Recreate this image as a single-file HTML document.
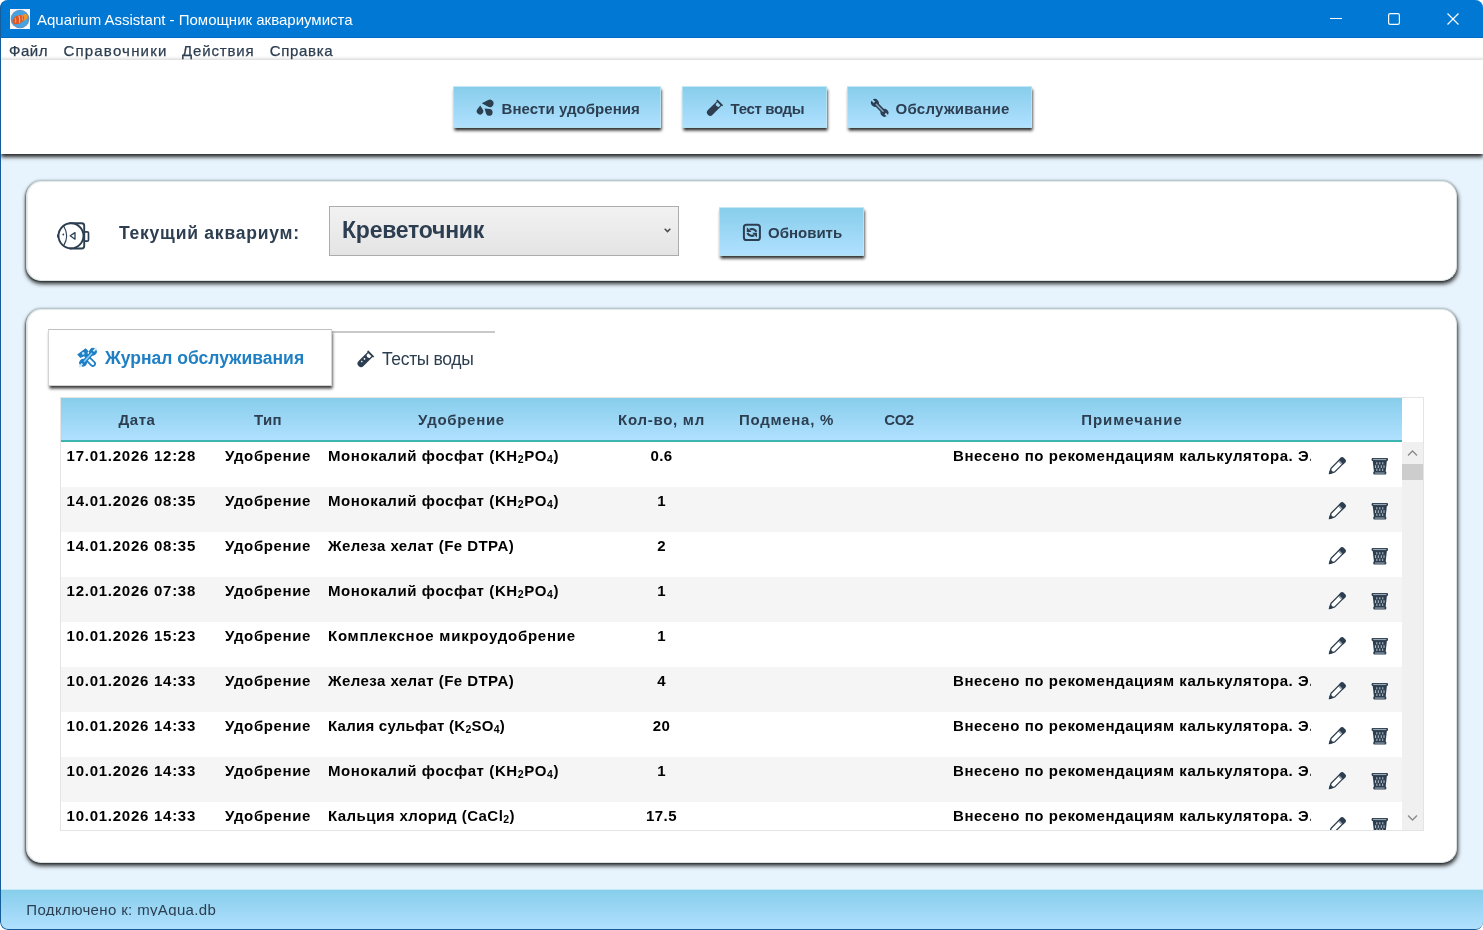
<!DOCTYPE html>
<html lang="ru">
<head>
<meta charset="utf-8">
<title>Aquarium Assistant</title>
<style>
*{box-sizing:border-box;margin:0;padding:0}
html,body{width:1483px;height:930px;overflow:hidden;background:#fff}
body{font-family:"Liberation Sans",sans-serif;color:#2c3e50;position:relative}
.abs{position:absolute}
#win{will-change:transform;position:absolute;left:0;top:0;width:1483px;height:930px;background:#e8f4fd;border-radius:8px 8px 8px 8px;overflow:hidden}
#win::after{content:"";position:absolute;left:0;top:0;right:-1px;bottom:0;border:1px solid #155d9a;border-top:none;border-radius:8px;pointer-events:none}
#title{position:absolute;left:0;top:0;width:1483px;height:38px;background:#0078d4;border-bottom:1px solid #006ac4}
#title .txt{position:absolute;left:37px;top:10.500px;font-size:15px;line-height:18px;color:#fff;white-space:nowrap}
#menu{position:absolute;left:1px;top:38px;width:1482px;height:22px;background:linear-gradient(#fff 0,#fff 18px,#f3f3f3 20px,#e9e9e9 21.300px,#f4f4f4 22px)}
#menu span{position:absolute;top:4px;font-size:15px;line-height:18px;white-space:nowrap;color:#2c3e50;-webkit-text-stroke:0.25px #2c3e50}
#tool{position:absolute;left:1px;top:60px;width:1482px;height:94px;background:#fff;box-shadow:0 3px 4px rgba(0,0,0,.85)}
.btn{position:absolute;background:linear-gradient(#87ceeb,#b0e0ff);box-shadow:.5px 2.5px 3px rgba(0,0,0,.85);border:1px solid rgba(215,235,235,.55)}
.btn .t{position:absolute;font-weight:bold;font-size:15px;line-height:20px;white-space:nowrap;color:#2c3e50}
.panel{position:absolute;background:#fff;border-radius:15px;box-shadow:.5px 3px 4px rgba(0,0,0,.78),0 0 2px rgba(0,0,0,.25),0 -1.500px 1.500px rgba(110,130,135,.17),-1px 1px 1.500px rgba(60,75,80,.38),inset 1px 0 0 #e6ebec;border:1px solid #d9e1e3;border-top-color:#e3e9e9}
#status{position:absolute;left:1px;top:889px;width:1482px;height:40px;background:linear-gradient(#87ceeb,#b0e0ff);border-top:1px solid #c4e8f6}

.lbl{font-weight:bold;font-size:17.5px;line-height:22px;white-space:nowrap;color:#2c3e50}
.combo{background:linear-gradient(#f2f2f2,#e4e4e4);border:1px solid #acacac}
.cval{font-weight:bold;font-size:23px;line-height:28px;white-space:nowrap;color:#2c3e50}

.tabA{background:#fff;border:1px solid #d4d4d4;border-top-color:#c0c0c0;box-shadow:.5px 2.5px 3px rgba(0,0,0,.8)}
.ta{font-weight:bold;font-size:17.5px;line-height:22px;white-space:nowrap;color:#1e7fc4}
.tb{font-size:17.5px;line-height:22px;white-space:nowrap;color:#2c3e50;letter-spacing:-.34px}
#grid{border:1px solid #e4e4e4;background:#fff}
#hdr{background:linear-gradient(#87ceeb,#b0e0ff);border-bottom:2px solid #3db6b2}
.h{margin-left:1px;position:absolute;top:13px;text-align:center;font-weight:bold;font-size:15px;line-height:18px;color:#2c3e50;white-space:nowrap}
.row{position:absolute;left:0;width:1341px;height:45px}
.c{margin-left:1px;position:absolute;top:5px;font-weight:bold;font-size:15px;line-height:18px;color:#000;white-space:nowrap}
.c sub{font-size:10.500px;vertical-align:baseline;position:relative;top:2px;line-height:0}
.c1{left:4.600px;letter-spacing:.74px}
.c2{left:150px;width:112px;text-align:center;letter-spacing:.62px}
.c3{left:266px}
.c4{left:537px;width:125px;text-align:center;letter-spacing:.4px}
.c7{left:891px;width:358.400px;overflow:hidden;letter-spacing:.57px}
.st{font-size:15px;line-height:18px;white-space:nowrap;color:#2c3e50;letter-spacing:.36px}
</style>
</head>
<body>
<div id="win">
  <div id="title">
    <svg class="abs" style="left:10px;top:9px" width="20" height="20" viewBox="0 0 20 20">
      <rect width="20" height="20" fill="#f6f7fb"/>
      <circle cx="10" cy="10" r="9.300" fill="#6f8fb4"/>
      <circle cx="10" cy="10" r="8.500" fill="#46a3e2"/>
      <ellipse cx="14.800" cy="8.200" rx="2.500" ry="3.300" fill="#f39521" transform="rotate(25 14.800 8.200)"/>
      <ellipse cx="8.300" cy="10.600" rx="6.300" ry="4.100" fill="#e2561f" transform="rotate(-27 8.300 10.600)"/>
      <path d="M8.800 6.600Q10.200 9.800 9.600 13.600" stroke="#f3c7b2" stroke-width="1" fill="none"/>
      <path d="M5.300 9Q6 11.400 5.600 13.600" stroke="#f0b9a0" stroke-width=".8" fill="none"/>
      <path d="M11.800 5.800Q12.900 8.600 12.400 11.400" stroke="#ef9a78" stroke-width=".9" fill="none"/>
    </svg>
    <div class="txt">Aquarium Assistant - Помощник аквариумиста</div>
    <svg class="abs" style="left:1320px;top:8px" width="150" height="22" viewBox="0 0 150 22" fill="none" stroke="#fff" stroke-width="1.200">
      <path d="M10 10.500H22"/>
      <rect x="68.600" y="5.600" width="10.800" height="10.800" rx="1.600"/>
      <path d="M127.500 5.500L138.500 16.500M138.500 5.500L127.500 16.500"/>
    </svg>
  </div>
  <div id="menu">
    <span style="left:8px;letter-spacing:.5px">Файл</span>
    <span style="left:62.400px;letter-spacing:1.210px">Справочники</span>
    <span style="left:181px;letter-spacing:.85px">Действия</span>
    <span style="left:268.700px;letter-spacing:.68px">Справка</span>
  </div>
  <div id="tool">
    <div class="btn" style="left:452px;top:26px;width:208px;height:42px">
      <div class="t" style="left:47.500px;top:12px;letter-spacing:.05px">Внести удобрения</div>
    </div>
    <div class="btn" style="left:681px;top:26px;width:145px;height:42px">
      <div class="t" style="left:47.600px;top:12px;letter-spacing:-.35px">Тест воды</div>
    </div>
    <div class="btn" style="left:846px;top:26px;width:185px;height:42px">
      <div class="t" style="left:47.600px;top:12px;letter-spacing:.27px">Обслуживание</div>
    </div>
  </div>
  <div class="panel" id="p1" style="left:26px;top:181px;width:1431px;height:100px">
    <div class="abs lbl" style="left:92px;top:40px;letter-spacing:.77px">Текущий аквариум:</div>
    <div class="abs combo" style="left:302px;top:24px;width:350px;height:50px">
      <div class="abs cval" style="left:12px;top:9px;letter-spacing:-.23px">Креветочник</div>
      <svg class="abs" style="left:332.600px;top:20px" width="9" height="7" viewBox="0 0 9 7" fill="none" stroke="#4a4a4a" stroke-width="1.500"><path d="M1.700 1.800L4.500 4.600L7.300 1.800"/></svg>
    </div>
    <div class="btn" style="left:692px;top:25px;width:145px;height:49px">
      <div class="t" style="left:48px;top:15px">Обновить</div>
    </div>
  </div>
  <div class="panel" id="p2" style="left:26px;top:309px;width:1431px;height:554px">
    <div class="abs" style="left:304px;top:21px;width:164px;height:2px;background:#c9c9c9"></div>
    <div class="abs tabA" style="left:21px;top:19px;width:284px;height:57px">
      <div class="abs ta" style="left:56px;top:17px">Журнал обслуживания</div>
    </div>
    <div class="abs tb" style="left:355px;top:38px">Тесты воды</div>

    <div class="abs" id="grid" style="left:33px;top:87px;width:1364px;height:434px">
      <div class="abs" id="hdr" style="left:0;top:0;width:1341px;height:44px">
        <div class="h" style="left:0;width:150px;letter-spacing:.57px">Дата</div>
        <div class="h" style="left:150px;width:112px;letter-spacing:.4px">Тип</div>
        <div class="h" style="left:262px;width:275px;letter-spacing:.7px">Удобрение</div>
        <div class="h" style="left:537px;width:125px;letter-spacing:.72px">Кол-во, мл</div>
        <div class="h" style="left:662px;width:125px;letter-spacing:.73px">Подмена, %</div>
        <div class="h" style="left:787px;width:100px;letter-spacing:-.5px">CO2</div>
        <div class="h" style="left:887px;width:366px;letter-spacing:.97px">Примечание</div>
      </div>
      <div class="abs" id="rows" style="left:0;top:44px;width:1341px;height:388px;overflow:hidden">
      <div class="row" style="top:0px;background:#fff">
        <div class="c c1">17.01.2026 12:28</div><div class="c c2">Удобрение</div><div class="c c3" style="letter-spacing:.6px">Монокалий фосфат (KH<sub>2</sub>PO<sub>4</sub>)</div><div class="c c4">0.6</div><div class="c c7">Внесено по рекомендациям калькулятора. Э.</div>
        </div>
      <div class="row" style="top:45px;background:#f5f5f5">
        <div class="c c1">14.01.2026 08:35</div><div class="c c2">Удобрение</div><div class="c c3" style="letter-spacing:.6px">Монокалий фосфат (KH<sub>2</sub>PO<sub>4</sub>)</div><div class="c c4">1</div>
        </div>
      <div class="row" style="top:90px;background:#fff">
        <div class="c c1">14.01.2026 08:35</div><div class="c c2">Удобрение</div><div class="c c3" style="letter-spacing:.44px">Железа хелат (Fe DTPA)</div><div class="c c4">2</div>
        </div>
      <div class="row" style="top:135px;background:#f5f5f5">
        <div class="c c1">12.01.2026 07:38</div><div class="c c2">Удобрение</div><div class="c c3" style="letter-spacing:.6px">Монокалий фосфат (KH<sub>2</sub>PO<sub>4</sub>)</div><div class="c c4">1</div>
        </div>
      <div class="row" style="top:180px;background:#fff">
        <div class="c c1">10.01.2026 15:23</div><div class="c c2">Удобрение</div><div class="c c3" style="letter-spacing:.75px">Комплексное микроудобрение</div><div class="c c4">1</div>
        </div>
      <div class="row" style="top:225px;background:#f5f5f5">
        <div class="c c1">10.01.2026 14:33</div><div class="c c2">Удобрение</div><div class="c c3" style="letter-spacing:.44px">Железа хелат (Fe DTPA)</div><div class="c c4">4</div><div class="c c7">Внесено по рекомендациям калькулятора. Э.</div>
        </div>
      <div class="row" style="top:270px;background:#fff">
        <div class="c c1">10.01.2026 14:33</div><div class="c c2">Удобрение</div><div class="c c3" style="letter-spacing:.25px">Калия сульфат (K<sub>2</sub>SO<sub>4</sub>)</div><div class="c c4">20</div><div class="c c7">Внесено по рекомендациям калькулятора. Э.</div>
        </div>
      <div class="row" style="top:315px;background:#f5f5f5">
        <div class="c c1">10.01.2026 14:33</div><div class="c c2">Удобрение</div><div class="c c3" style="letter-spacing:.6px">Монокалий фосфат (KH<sub>2</sub>PO<sub>4</sub>)</div><div class="c c4">1</div><div class="c c7">Внесено по рекомендациям калькулятора. Э.</div>
        </div>
      <div class="row" style="top:360px;background:#fff">
        <div class="c c1">10.01.2026 14:33</div><div class="c c2">Удобрение</div><div class="c c3" style="letter-spacing:.47px">Кальция хлорид (CaCl<sub>2</sub>)</div><div class="c c4">17.5</div><div class="c c7">Внесено по рекомендациям калькулятора. Э.</div>
        </div>
      </div>
      <div class="abs" id="sb" style="left:1341px;top:44px;width:21px;height:388px;background:#f0f0f0">
        <svg class="abs" style="left:5px;top:7px" width="11" height="8" viewBox="0 0 11 8" fill="none" stroke="#8a8a8a" stroke-width="1.300"><path d="M1 6.500L5.500 2L10 6.500"/></svg>
        <div class="abs" style="left:0;top:22px;width:21px;height:16px;background:#cdcdcd"></div>
        <svg class="abs" style="left:5px;top:372px" width="11" height="8" viewBox="0 0 11 8" fill="none" stroke="#8a8a8a" stroke-width="1.300"><path d="M1 1.500L5.500 6L10 1.500"/></svg>
      </div>
    </div>
  </div>
  <div id="status"><div class="abs" style="left:0;top:0;width:600px;height:25.600px;overflow:hidden"><div class="abs st" style="left:25.300px;top:10.500px">Подключено к: myAqua.db</div></div></div>
<!--OV-START--><svg id="ov" class="abs" style="left:0;top:0;pointer-events:none" width="1483" height="930" viewBox="0 0 1483 930">
<defs><clipPath id="cr"><rect x="61" y="442" width="1341" height="388"/></clipPath></defs>
<g fill="#2c3e50">
<path d="M481.8 103.3L488.21 100.05A3.75 3.75 0 1 1 488.12 106.7Z"/>
<path d="M480.2 105.4L482.78 109.42A3.3 3.3 0 1 1 477.35 109.23Z"/>
<path d="M484.6 108.4L489.62 109.03A3.4 3.4 0 1 1 485.92 113.29Z"/>
</g>
<g transform="rotate(45 714.1 108.6)"><path d="M710 99.85H718.2V101.35H717.4V114.05A3.3 3.3 0 0 1 710.8 114.05V101.35H710Z" fill="#2c3e50"/><path d="M712.1 101.75H716.1V104.25Q714.1 106.05 712.1 104.25Z" fill="#a0d8f3"/></g>
<g transform="rotate(-44 879.7 107.8)"><rect x="877.5" y="100.9" width="4.4" height="13.8" fill="#2c3e50"/><circle cx="879.7" cy="100.9" r="3.9" fill="#2c3e50"/><circle cx="879.7" cy="114.7" r="3.9" fill="#2c3e50"/><rect x="878.95" y="102.4" width="1.5" height="10.8" fill="#86a9c4"/><rect x="878.75" y="95.4" width="1.9" height="4.9" fill="#9dd6f4"/><rect x="878.75" y="115.7" width="1.9" height="4.9" fill="#9dd6f4"/></g>
<g fill="none" stroke="#2c3e50" stroke-linecap="round" stroke-linejoin="round">
<path d="M70 223.200H81.700Q84.200 223.200 84.200 225.700V246Q84.200 248.500 81.700 248.500H70" stroke-width="1.900"/>
<circle cx="71" cy="235.800" r="12.500" stroke-width="1.900" fill="#fff"/>
<rect x="84.200" y="231.800" width="4.300" height="9.400" rx="1.300" stroke-width="1.700"/>
<path d="M63.800 226.200Q69.500 235.800 63.800 245.400" stroke-width="1.100"/>
<path d="M70.200 235.800L75 232.600V239.200Z" stroke-width="1.300"/>
<circle cx="63.300" cy="234.500" r="0.900" fill="#2c3e50" stroke="none"/>
<path d="M57.600 234.800v2.200" stroke-width="1.100"/>
</g>
<g fill="none" stroke="#2c3e50">
<rect x="743.900" y="224.700" width="16" height="15.400" rx="2.600" stroke-width="2"/>
<path d="M749.600 229.600A5 5 0 0 1 756.400 231.700" stroke-width="2.200"/>
<path d="M754.200 235.200A5 5 0 0 1 747.400 233.100" stroke-width="2.200"/>
<path d="M746.800 227.300V232H751.500Z" fill="#2c3e50" stroke="none"/>
<path d="M757 237.500V232.800H752.300Z" fill="#2c3e50" stroke="none"/>
</g>
<g>
<g transform="rotate(-45 86.500 357.500)">
  <rect x="84.400" y="358" width="4.400" height="10.600" rx="2.200" fill="#fff" stroke="#1e7fc4" stroke-width="1.700"/>
</g>
<path d="M77.200 354.600L85.600 348.300L88.800 351.400L87.200 353.100L89.300 355.200L86.200 358.300L84.100 356.200L80.300 357.900Z" fill="#1e7fc4"/>
<circle cx="83.200" cy="353.400" r="1.300" fill="#bfe4ff"/>

<g transform="rotate(42 88 357.3)"><rect x="85.9" y="349.9" width="4.2" height="14.8" fill="#1e7fc4"/><circle cx="88" cy="349.9" r="3.8" fill="#1e7fc4"/><circle cx="88" cy="364.7" r="3.8" fill="#1e7fc4"/><rect x="87.25" y="351.4" width="1.5" height="11.8" fill="#8fd0ff"/><rect x="87.05" y="344.5" width="1.9" height="4.8" fill="#cfe8fb"/><rect x="87.05" y="365.7" width="1.9" height="4.8" fill="#cfe8fb"/></g>
</g>
<g transform="rotate(45 364.9 359.7)"><path d="M360.6 350.8H369.2V352.3H368.4V365.1A3.5 3.5 0 0 1 361.4 365.1V352.3H360.6Z" fill="#2c3e50"/><path d="M362.7 352.7H367.1V355.2Q364.9 357 362.7 355.2Z" fill="#fff"/><circle cx="364" cy="359.4" r="0.9" fill="#fff"/><circle cx="364" cy="363.2" r="0.8" fill="#fff"/></g>
<g clip-path="url(#cr)">
<g transform="translate(0 0)"><g transform="rotate(45 1337.200 465.800)">
<path d="M1334.600 457.600H1339.800V471.800L1337.200 476.700L1334.600 471.800Z" fill="#fff" stroke="#2c3e50" stroke-width="1.300" stroke-linejoin="round"/>
<path d="M1334.600 457.400Q1334.600 456.200 1335.800 456.200H1338.600Q1339.800 456.200 1339.800 457.400V460H1334.600Z" fill="#2c3e50" stroke="#2c3e50" stroke-width="1.300" stroke-linejoin="round"/>
<path d="M1334.600 461.500H1339.800" stroke="#2c3e50" stroke-width="0.800"/>
<path d="M1335.500 473.600H1338.900L1337.200 476.800Z" fill="#2c3e50" stroke="#2c3e50" stroke-width="1"/>
</g><rect x="1371.600" y="458" width="16.400" height="3" rx="1" fill="#2c3e50"/>
<rect x="1373.200" y="458.900" width="13.200" height="1.200" fill="#9aa7b3"/>
<path d="M1372.700 460.800H1386.900L1385.600 472.200H1374Z" fill="#2c3e50"/>
<rect x="1373.300" y="471.600" width="13" height="2.800" rx="1" fill="#2c3e50"/>
<rect x="1375" y="472.500" width="9.600" height="1.100" fill="#9aa7b3"/>
<path stroke="#cdd6de" stroke-width="0.900" stroke-linecap="round" d="M1376.800 462.600V464M1379.800 462.600V464M1382.800 462.600V464M1375.600 465.600V467.600M1378.300 465.600V467.600M1381.300 465.600V467.600M1384 465.600V467.600M1376.900 469V470.600M1379.800 469V470.600M1382.700 469V470.600"/></g>
<g transform="translate(0 45)"><g transform="rotate(45 1337.200 465.800)">
<path d="M1334.600 457.600H1339.800V471.800L1337.200 476.700L1334.600 471.800Z" fill="#fff" stroke="#2c3e50" stroke-width="1.300" stroke-linejoin="round"/>
<path d="M1334.600 457.400Q1334.600 456.200 1335.800 456.200H1338.600Q1339.800 456.200 1339.800 457.400V460H1334.600Z" fill="#2c3e50" stroke="#2c3e50" stroke-width="1.300" stroke-linejoin="round"/>
<path d="M1334.600 461.500H1339.800" stroke="#2c3e50" stroke-width="0.800"/>
<path d="M1335.500 473.600H1338.900L1337.200 476.800Z" fill="#2c3e50" stroke="#2c3e50" stroke-width="1"/>
</g><rect x="1371.600" y="458" width="16.400" height="3" rx="1" fill="#2c3e50"/>
<rect x="1373.200" y="458.900" width="13.200" height="1.200" fill="#9aa7b3"/>
<path d="M1372.700 460.800H1386.900L1385.600 472.200H1374Z" fill="#2c3e50"/>
<rect x="1373.300" y="471.600" width="13" height="2.800" rx="1" fill="#2c3e50"/>
<rect x="1375" y="472.500" width="9.600" height="1.100" fill="#9aa7b3"/>
<path stroke="#cdd6de" stroke-width="0.900" stroke-linecap="round" d="M1376.800 462.600V464M1379.800 462.600V464M1382.800 462.600V464M1375.600 465.600V467.600M1378.300 465.600V467.600M1381.300 465.600V467.600M1384 465.600V467.600M1376.900 469V470.600M1379.800 469V470.600M1382.700 469V470.600"/></g>
<g transform="translate(0 90)"><g transform="rotate(45 1337.200 465.800)">
<path d="M1334.600 457.600H1339.800V471.800L1337.200 476.700L1334.600 471.800Z" fill="#fff" stroke="#2c3e50" stroke-width="1.300" stroke-linejoin="round"/>
<path d="M1334.600 457.400Q1334.600 456.200 1335.800 456.200H1338.600Q1339.800 456.200 1339.800 457.400V460H1334.600Z" fill="#2c3e50" stroke="#2c3e50" stroke-width="1.300" stroke-linejoin="round"/>
<path d="M1334.600 461.500H1339.800" stroke="#2c3e50" stroke-width="0.800"/>
<path d="M1335.500 473.600H1338.900L1337.200 476.800Z" fill="#2c3e50" stroke="#2c3e50" stroke-width="1"/>
</g><rect x="1371.600" y="458" width="16.400" height="3" rx="1" fill="#2c3e50"/>
<rect x="1373.200" y="458.900" width="13.200" height="1.200" fill="#9aa7b3"/>
<path d="M1372.700 460.800H1386.900L1385.600 472.200H1374Z" fill="#2c3e50"/>
<rect x="1373.300" y="471.600" width="13" height="2.800" rx="1" fill="#2c3e50"/>
<rect x="1375" y="472.500" width="9.600" height="1.100" fill="#9aa7b3"/>
<path stroke="#cdd6de" stroke-width="0.900" stroke-linecap="round" d="M1376.800 462.600V464M1379.800 462.600V464M1382.800 462.600V464M1375.600 465.600V467.600M1378.300 465.600V467.600M1381.300 465.600V467.600M1384 465.600V467.600M1376.900 469V470.600M1379.800 469V470.600M1382.700 469V470.600"/></g>
<g transform="translate(0 135)"><g transform="rotate(45 1337.200 465.800)">
<path d="M1334.600 457.600H1339.800V471.800L1337.200 476.700L1334.600 471.800Z" fill="#fff" stroke="#2c3e50" stroke-width="1.300" stroke-linejoin="round"/>
<path d="M1334.600 457.400Q1334.600 456.200 1335.800 456.200H1338.600Q1339.800 456.200 1339.800 457.400V460H1334.600Z" fill="#2c3e50" stroke="#2c3e50" stroke-width="1.300" stroke-linejoin="round"/>
<path d="M1334.600 461.500H1339.800" stroke="#2c3e50" stroke-width="0.800"/>
<path d="M1335.500 473.600H1338.900L1337.200 476.800Z" fill="#2c3e50" stroke="#2c3e50" stroke-width="1"/>
</g><rect x="1371.600" y="458" width="16.400" height="3" rx="1" fill="#2c3e50"/>
<rect x="1373.200" y="458.900" width="13.200" height="1.200" fill="#9aa7b3"/>
<path d="M1372.700 460.800H1386.900L1385.600 472.200H1374Z" fill="#2c3e50"/>
<rect x="1373.300" y="471.600" width="13" height="2.800" rx="1" fill="#2c3e50"/>
<rect x="1375" y="472.500" width="9.600" height="1.100" fill="#9aa7b3"/>
<path stroke="#cdd6de" stroke-width="0.900" stroke-linecap="round" d="M1376.800 462.600V464M1379.800 462.600V464M1382.800 462.600V464M1375.600 465.600V467.600M1378.300 465.600V467.600M1381.300 465.600V467.600M1384 465.600V467.600M1376.900 469V470.600M1379.800 469V470.600M1382.700 469V470.600"/></g>
<g transform="translate(0 180)"><g transform="rotate(45 1337.200 465.800)">
<path d="M1334.600 457.600H1339.800V471.800L1337.200 476.700L1334.600 471.800Z" fill="#fff" stroke="#2c3e50" stroke-width="1.300" stroke-linejoin="round"/>
<path d="M1334.600 457.400Q1334.600 456.200 1335.800 456.200H1338.600Q1339.800 456.200 1339.800 457.400V460H1334.600Z" fill="#2c3e50" stroke="#2c3e50" stroke-width="1.300" stroke-linejoin="round"/>
<path d="M1334.600 461.500H1339.800" stroke="#2c3e50" stroke-width="0.800"/>
<path d="M1335.500 473.600H1338.900L1337.200 476.800Z" fill="#2c3e50" stroke="#2c3e50" stroke-width="1"/>
</g><rect x="1371.600" y="458" width="16.400" height="3" rx="1" fill="#2c3e50"/>
<rect x="1373.200" y="458.900" width="13.200" height="1.200" fill="#9aa7b3"/>
<path d="M1372.700 460.800H1386.900L1385.600 472.200H1374Z" fill="#2c3e50"/>
<rect x="1373.300" y="471.600" width="13" height="2.800" rx="1" fill="#2c3e50"/>
<rect x="1375" y="472.500" width="9.600" height="1.100" fill="#9aa7b3"/>
<path stroke="#cdd6de" stroke-width="0.900" stroke-linecap="round" d="M1376.800 462.600V464M1379.800 462.600V464M1382.800 462.600V464M1375.600 465.600V467.600M1378.300 465.600V467.600M1381.300 465.600V467.600M1384 465.600V467.600M1376.900 469V470.600M1379.800 469V470.600M1382.700 469V470.600"/></g>
<g transform="translate(0 225)"><g transform="rotate(45 1337.200 465.800)">
<path d="M1334.600 457.600H1339.800V471.800L1337.200 476.700L1334.600 471.800Z" fill="#fff" stroke="#2c3e50" stroke-width="1.300" stroke-linejoin="round"/>
<path d="M1334.600 457.400Q1334.600 456.200 1335.800 456.200H1338.600Q1339.800 456.200 1339.800 457.400V460H1334.600Z" fill="#2c3e50" stroke="#2c3e50" stroke-width="1.300" stroke-linejoin="round"/>
<path d="M1334.600 461.500H1339.800" stroke="#2c3e50" stroke-width="0.800"/>
<path d="M1335.500 473.600H1338.900L1337.200 476.800Z" fill="#2c3e50" stroke="#2c3e50" stroke-width="1"/>
</g><rect x="1371.600" y="458" width="16.400" height="3" rx="1" fill="#2c3e50"/>
<rect x="1373.200" y="458.900" width="13.200" height="1.200" fill="#9aa7b3"/>
<path d="M1372.700 460.800H1386.900L1385.600 472.200H1374Z" fill="#2c3e50"/>
<rect x="1373.300" y="471.600" width="13" height="2.800" rx="1" fill="#2c3e50"/>
<rect x="1375" y="472.500" width="9.600" height="1.100" fill="#9aa7b3"/>
<path stroke="#cdd6de" stroke-width="0.900" stroke-linecap="round" d="M1376.800 462.600V464M1379.800 462.600V464M1382.800 462.600V464M1375.600 465.600V467.600M1378.300 465.600V467.600M1381.300 465.600V467.600M1384 465.600V467.600M1376.900 469V470.600M1379.800 469V470.600M1382.700 469V470.600"/></g>
<g transform="translate(0 270)"><g transform="rotate(45 1337.200 465.800)">
<path d="M1334.600 457.600H1339.800V471.800L1337.200 476.700L1334.600 471.800Z" fill="#fff" stroke="#2c3e50" stroke-width="1.300" stroke-linejoin="round"/>
<path d="M1334.600 457.400Q1334.600 456.200 1335.800 456.200H1338.600Q1339.800 456.200 1339.800 457.400V460H1334.600Z" fill="#2c3e50" stroke="#2c3e50" stroke-width="1.300" stroke-linejoin="round"/>
<path d="M1334.600 461.500H1339.800" stroke="#2c3e50" stroke-width="0.800"/>
<path d="M1335.500 473.600H1338.900L1337.200 476.800Z" fill="#2c3e50" stroke="#2c3e50" stroke-width="1"/>
</g><rect x="1371.600" y="458" width="16.400" height="3" rx="1" fill="#2c3e50"/>
<rect x="1373.200" y="458.900" width="13.200" height="1.200" fill="#9aa7b3"/>
<path d="M1372.700 460.800H1386.900L1385.600 472.200H1374Z" fill="#2c3e50"/>
<rect x="1373.300" y="471.600" width="13" height="2.800" rx="1" fill="#2c3e50"/>
<rect x="1375" y="472.500" width="9.600" height="1.100" fill="#9aa7b3"/>
<path stroke="#cdd6de" stroke-width="0.900" stroke-linecap="round" d="M1376.800 462.600V464M1379.800 462.600V464M1382.800 462.600V464M1375.600 465.600V467.600M1378.300 465.600V467.600M1381.300 465.600V467.600M1384 465.600V467.600M1376.900 469V470.600M1379.800 469V470.600M1382.700 469V470.600"/></g>
<g transform="translate(0 315)"><g transform="rotate(45 1337.200 465.800)">
<path d="M1334.600 457.600H1339.800V471.800L1337.200 476.700L1334.600 471.800Z" fill="#fff" stroke="#2c3e50" stroke-width="1.300" stroke-linejoin="round"/>
<path d="M1334.600 457.400Q1334.600 456.200 1335.800 456.200H1338.600Q1339.800 456.200 1339.800 457.400V460H1334.600Z" fill="#2c3e50" stroke="#2c3e50" stroke-width="1.300" stroke-linejoin="round"/>
<path d="M1334.600 461.500H1339.800" stroke="#2c3e50" stroke-width="0.800"/>
<path d="M1335.500 473.600H1338.900L1337.200 476.800Z" fill="#2c3e50" stroke="#2c3e50" stroke-width="1"/>
</g><rect x="1371.600" y="458" width="16.400" height="3" rx="1" fill="#2c3e50"/>
<rect x="1373.200" y="458.900" width="13.200" height="1.200" fill="#9aa7b3"/>
<path d="M1372.700 460.800H1386.900L1385.600 472.200H1374Z" fill="#2c3e50"/>
<rect x="1373.300" y="471.600" width="13" height="2.800" rx="1" fill="#2c3e50"/>
<rect x="1375" y="472.500" width="9.600" height="1.100" fill="#9aa7b3"/>
<path stroke="#cdd6de" stroke-width="0.900" stroke-linecap="round" d="M1376.800 462.600V464M1379.800 462.600V464M1382.800 462.600V464M1375.600 465.600V467.600M1378.300 465.600V467.600M1381.300 465.600V467.600M1384 465.600V467.600M1376.900 469V470.600M1379.800 469V470.600M1382.700 469V470.600"/></g>
<g transform="translate(0 360)"><g transform="rotate(45 1337.200 465.800)">
<path d="M1334.600 457.600H1339.800V471.800L1337.200 476.700L1334.600 471.800Z" fill="#fff" stroke="#2c3e50" stroke-width="1.300" stroke-linejoin="round"/>
<path d="M1334.600 457.400Q1334.600 456.200 1335.800 456.200H1338.600Q1339.800 456.200 1339.800 457.400V460H1334.600Z" fill="#2c3e50" stroke="#2c3e50" stroke-width="1.300" stroke-linejoin="round"/>
<path d="M1334.600 461.500H1339.800" stroke="#2c3e50" stroke-width="0.800"/>
<path d="M1335.500 473.600H1338.900L1337.200 476.800Z" fill="#2c3e50" stroke="#2c3e50" stroke-width="1"/>
</g><rect x="1371.600" y="458" width="16.400" height="3" rx="1" fill="#2c3e50"/>
<rect x="1373.200" y="458.900" width="13.200" height="1.200" fill="#9aa7b3"/>
<path d="M1372.700 460.800H1386.900L1385.600 472.200H1374Z" fill="#2c3e50"/>
<rect x="1373.300" y="471.600" width="13" height="2.800" rx="1" fill="#2c3e50"/>
<rect x="1375" y="472.500" width="9.600" height="1.100" fill="#9aa7b3"/>
<path stroke="#cdd6de" stroke-width="0.900" stroke-linecap="round" d="M1376.800 462.600V464M1379.800 462.600V464M1382.800 462.600V464M1375.600 465.600V467.600M1378.300 465.600V467.600M1381.300 465.600V467.600M1384 465.600V467.600M1376.900 469V470.600M1379.800 469V470.600M1382.700 469V470.600"/></g>
</g>
</svg><!--OV-END-->
</div>
</body>
</html>
